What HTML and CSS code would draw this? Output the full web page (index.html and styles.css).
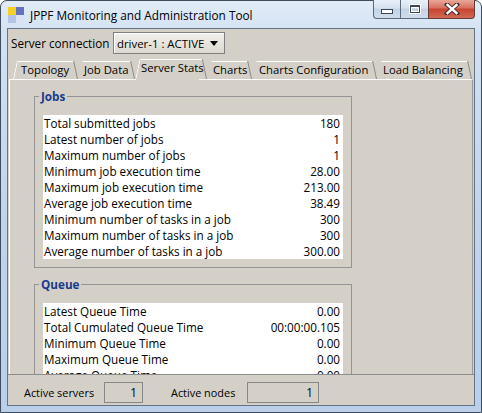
FILE: index.html
```html
<!DOCTYPE html>
<html>
<head>
<meta charset="utf-8">
<title>JPPF Monitoring and Administration Tool</title>
<link rel="stylesheet" href="styles.css">
</head>
<body>
<div class="window">
  <div class="titlebar">
    <div class="app-icon"><span class="q q1"></span><span class="q q2"></span><span class="q q3"></span><span class="q q4"></span></div>
    <div class="title">JPPF Monitoring and Administration Tool</div>
    <div class="caption">
      <div class="cbtn cmin"><span class="min-glyph"></span></div>
      <div class="cbtn cmax"><span class="max-glyph"></span></div>
      <div class="cbtn cclose">
        <svg width="16" height="12" viewBox="0 0 16 12"><path d="M3 1.5 L13 10.5 M13 1.5 L3 10.5" stroke="#3a2a2a" stroke-width="4.2" stroke-linecap="square" fill="none"/><path d="M3.5 2 L12.5 10 M12.5 2 L3.5 10" stroke="#ffffff" stroke-width="2.4" stroke-linecap="square" fill="none"/></svg>
      </div>
    </div>
  </div>
  <div class="client">
    <div class="conn-row">
      <span class="conn-label">Server connection</span>
      <div class="combo"><span class="combo-text">driver-1 : ACTIVE</span><span class="combo-arrow"></span></div>
    </div>
    <div class="tabs">
      <div class="tab first t-topology">Topology</div>
      <div class="tab t-jobdata">Job Data</div>
      <div class="tab selected t-stats">Server Stats</div>
      <div class="tab t-charts">Charts</div>
      <div class="tab t-chartsconf">Charts Configuration</div>
      <div class="tab t-lb">Load Balancing</div>
    </div>
    <div class="panel">
      <fieldset class="group">
        <legend>Jobs</legend>
        <table class="stats">
          <tr><td>Total submitted jobs</td><td class="v">180</td></tr>
          <tr><td>Latest number of jobs</td><td class="v">1</td></tr>
          <tr><td>Maximum number of jobs</td><td class="v">1</td></tr>
          <tr><td>Minimum job execution time</td><td class="v">28.00</td></tr>
          <tr><td>Maximum job execution time</td><td class="v">213.00</td></tr>
          <tr><td>Average job execution time</td><td class="v">38.49</td></tr>
          <tr><td>Minimum number of tasks in a job</td><td class="v">300</td></tr>
          <tr><td>Maximum number of tasks in a job</td><td class="v">300</td></tr>
          <tr><td>Average number of tasks in a job</td><td class="v">300.00</td></tr>
        </table>
      </fieldset>
      <fieldset class="group queue">
        <legend>Queue</legend>
        <table class="stats">
          <tr><td>Latest Queue Time</td><td class="v">0.00</td></tr>
          <tr><td>Total Cumulated Queue Time</td><td class="v">00:00:00.105</td></tr>
          <tr><td>Minimum Queue Time</td><td class="v">0.00</td></tr>
          <tr><td>Maximum Queue Time</td><td class="v">0.00</td></tr>
          <tr><td>Average Queue Time</td><td class="v">0.00</td></tr>
        </table>
      </fieldset>
    </div>
    <div class="statusbar">
      <span class="st-label st-servers-label">Active servers</span>
      <div class="st-box st-servers">1</div>
      <span class="st-label st-nodes-label">Active nodes</span>
      <div class="st-box st-nodes">1</div>
    </div>
  </div>
</div>
</body>
</html>
```

FILE: styles.css
```css
html, body {
  margin: 0;
  padding: 0;
}
body {
  width: 482px;
  height: 413px;
  overflow: hidden;
  font-family: "Open Sans", "Noto Sans", sans-serif;
  font-size: 11.7px;
  color: #000;
  background: #ffffff;
}
.window {
  width: 482px;
  height: 413px;
  box-sizing: border-box;
  border: 1px solid #3f4d5e;
  border-radius: 7px 7px 0 0;
  background: linear-gradient(to bottom, #e2ecf7 0px, #d3e2f3 30px, #c1d5ec 200px, #b9cfea 413px);
  padding: 0 6px 6px;
  display: flex;
  flex-direction: column;
}
.titlebar {
  height: 27px;
  display: flex;
  align-items: flex-start;
  flex: none;
}
.app-icon {
  margin: 6px 0 0 1px;
  width: 16px;
  height: 16px;
  display: grid;
  grid-template-columns: 8px 8px;
  grid-template-rows: 8px 8px;
}
.q1 { background: #f7cf1e; }
.q2 { background: #6472bd; }
.q3 { background: #b4c3e6; }
.q4 { background: #dbe3f3; }
.title {
  margin: 6px 0 0 6px;
  line-height: 16px;
  font-size: 11.8px;
  color: #000;
}
.caption {
  margin-left: auto;
  margin-top: -1px;
  display: flex;
  height: 19px;
}
.cbtn {
  box-sizing: border-box;
  height: 19px;
  border: 1px solid #5b6a7d;
  border-top: none;
  display: flex;
  align-items: center;
  justify-content: center;
}
.cmin {
  width: 27px;
  border-right: none;
  border-bottom-left-radius: 4px;
  background: linear-gradient(to bottom, #e9f0f9 0%, #d6e1ef 45%, #c3d2e6 50%, #cfdcec 100%);
}
.cmax {
  width: 28px;
  border-right: none;
  background: linear-gradient(to bottom, #e9f0f9 0%, #d6e1ef 45%, #c3d2e6 50%, #cfdcec 100%);
}
.cclose {
  width: 47px;
  border-bottom-right-radius: 4px;
  border-color: #6b3a34;
  background: linear-gradient(to bottom, #e9a897 0%, #d66f5f 45%, #c7442f 50%, #d06a55 100%);
}
.min-glyph {
  width: 10px;
  height: 3px;
  margin-top: 5px;
  background: #fff;
  border: 1px solid #3c4654;
}
.max-glyph {
  width: 8px;
  height: 5px;
  background: transparent;
  border: 1px solid #3c4654;
  border-top-width: 2px;
  box-shadow: inset 0 0 0 1px #fff, 0 0 0 1px #fff;
}
.client {
  flex: 1;
  border: 1px solid #647386;
  background: #d4d0c8;
  display: flex;
  flex-direction: column;
  overflow: hidden;
}
.conn-row {
  display: flex;
  align-items: center;
  height: 22px;
  padding: 3px 0 0 3px;
  flex: none;
}
.conn-label {
  flex: none;
  width: 102px;
  white-space: nowrap;
}
.combo {
  flex: none;
  box-sizing: border-box;
  width: 112px;
  height: 22px;
  border: 1px solid #7f7f7f;
  background: linear-gradient(to bottom, #f2f0ec, #dcd8d0);
  box-shadow: inset 1px 1px 0 #ffffff;
  display: flex;
  align-items: center;
  padding: 0 0 0 3px;
}
.combo-text {
  flex: 1;
  white-space: nowrap;
  font-size: 11.4px;
}
.combo-arrow {
  flex: none;
  width: 0;
  height: 0;
  border-left: 4px solid transparent;
  border-right: 4px solid transparent;
  border-top: 5px solid #000;
  margin-right: 6px;
}
.tabs {
  display: flex;
  height: 19px;
  margin-top: 6px;
  padding-left: 5px;
  flex: none;
}
.tab {
  flex: none;
  box-sizing: border-box;
  position: relative;
  height: 19px;
  line-height: 20px;
  padding: 0 0 0 6px;
  white-space: nowrap;
  font-size: 11.3px;
}
.t-topology { width: 65px; padding-left: 8px; }
.t-jobdata { width: 57px; }
.t-stats { width: 72px; }
.t-charts { width: 45px; }
.t-chartsconf { width: 125px; padding-left: 7px; }
.t-lb { width: 95px; }
.tab::before {
  content: "";
  position: absolute;
  left: 0;
  right: 8px;
  top: 1px;
  bottom: 0;
  border-top: 1px solid #ffffff;
  border-left: 1px solid transparent;
  border-top-left-radius: 2px;
  transform: skewX(-12deg);
  transform-origin: bottom left;
}
.tab::after {
  content: "";
  position: absolute;
  right: 0;
  top: 1px;
  bottom: 0;
  width: 0;
  border-right: 1px solid #8a8a8a;
  transform: skewX(12deg);
  transform-origin: bottom right;
}
.tab.first::before {
  border-left-color: #ffffff;
}
.tab.selected {
  line-height: 16px;
  z-index: 1;
}
.tab.selected::before {
  top: -1px;
  bottom: -1px;
  border-left-color: #ffffff;
  background: #d4d0c8;
  z-index: -1;
}
.tab.selected::after {
  top: -1px;
}
.panel {
  flex: 1;
  margin: 0 1px;
  border-top: 1px solid #ffffff;
  border-left: 1px solid #ffffff;
  border-right: 1px solid #9a9a9a;
  padding: 8px 0 0 24px;
  overflow: hidden;
  min-height: 0;
}
.group {
  width: 300px;
  margin: 0;
  padding: 11px 8px 8px 8px;
  border: 1px solid #949494;
  border-radius: 0;
}
.group legend {
  font-weight: bold;
  color: #173b8c;
  line-height: 16px;
  padding: 0 2px;
  margin-left: -4px;
}
.queue {
  margin-top: 8px;
}
.stats {
  width: 300px;
  border-collapse: collapse;
  background: #ffffff;
}
.stats td {
  padding: 0 0 0 1px;
  height: 16px;
  line-height: 16px;
  white-space: nowrap;
}
.stats td.v {
  text-align: right;
  padding: 0 3px 0 0;
}
.statusbar {
  flex: none;
  box-sizing: border-box;
  height: 31px;
  border-top: 1px solid #8c8c8c;
  display: flex;
  align-items: flex-start;
  padding: 7px 0 0 16px;
}
.st-label {
  flex: none;
  line-height: 21px;
  font-size: 10.9px;
  white-space: nowrap;
}
.st-servers-label {
  width: 80px;
}
.st-nodes-label {
  width: 76px;
  margin-left: 28px;
}
.st-box {
  flex: none;
  box-sizing: border-box;
  height: 21px;
  line-height: 19px;
  border: 1px solid #878787;
  text-align: right;
  padding-right: 5px;
}
.st-servers { width: 39px; }
.st-nodes { width: 72px; }
```
